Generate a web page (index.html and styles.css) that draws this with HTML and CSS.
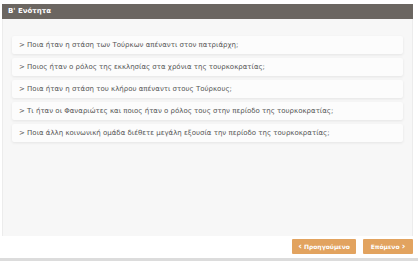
FILE: index.html
```html
<!DOCTYPE html>
<html lang="el">
<head>
    <meta charset="UTF-8">
    <title>Β' Ενότητα</title>
    <link rel="stylesheet" href="styles.css">
</head>
<body>
    <div class="page">
        <div class="section-title">Β' Ενότητα</div>
        <div class="panel">
            <div class="question">&gt; Ποια ήταν η στάση των Τούρκων απέναντι στον πατριάρχη;</div>
            <div class="question">&gt; Ποιος ήταν ο ρόλος της εκκλησίας στα χρόνια της τουρκοκρατίας;</div>
            <div class="question">&gt; Ποια ήταν η στάση του κλήρου απέναντι στους Τούρκους;</div>
            <div class="question">&gt; Τι ήταν οι Φαναριώτες και ποιος ήταν ο ρόλος τους στην περίοδο της τουρκοκρατίας;</div>
            <div class="question">&gt; Ποια άλλη κοινωνική ομάδα διέθετε μεγάλη εξουσία την περίοδο της τουρκοκρατίας;</div>
        </div>
        <div class="nav">
            <button class="nav-btn prev"><span class="chev">&lsaquo;</span> Προηγούμενο</button>
            <button class="nav-btn next">Επόμενο <span class="chev">&rsaquo;</span></button>
        </div>
    </div>
    <div class="bottom-line"></div>
</body>
</html>
```

FILE: styles.css
```css
body {
    margin: 0;
    background-color: #ffffff;
    font-family: 'DejaVu Sans', Verdana, sans-serif;
    color: #444;
}
.page {
    padding: 4px 5px 0 2px;
}
.section-title {
    background-color: #6b6661;
    color: #ffffff;
    font-size: 7px;
    font-weight: bold;
    height: 15px;
    line-height: 15px;
    padding-left: 6px;
}
.panel {
    background-color: #f7f7f7;
    border-left: 1px solid #ececec;
    border-right: 1px solid #ececec;
    height: 217px;
    box-sizing: border-box;
    padding: 17px 9px 0 9px;
}
.question {
    background-color: #fcfcfc;
    height: 18px;
    line-height: 18px;
    margin-bottom: 4px;
    padding-left: 7px;
    font-size: 7px;
    color: #555;
    box-shadow: 0 1px 3px rgba(0, 0, 0, 0.08);
    border-radius: 2px;
    white-space: nowrap;
}
.nav {
    display: flex;
    justify-content: flex-end;
    gap: 7px;
    padding-top: 3px;
}
.nav-btn {
    background-color: #e2a35f;
    color: #ffffff;
    border: none;
    border-radius: 1px;
    font-family: 'DejaVu Sans', Verdana, sans-serif;
    font-size: 6px;
    font-weight: bold;
    height: 15px;
    line-height: 15px;
    padding: 0;
    white-space: nowrap;
}
.chev {
    font-size: 9px;
    vertical-align: top;
}
.prev {
    width: 64px;
}
.next {
    width: 50px;
}
.bottom-line {
    margin-top: 4px;
    height: 3px;
    background-color: #dcdcdc;
}
```
